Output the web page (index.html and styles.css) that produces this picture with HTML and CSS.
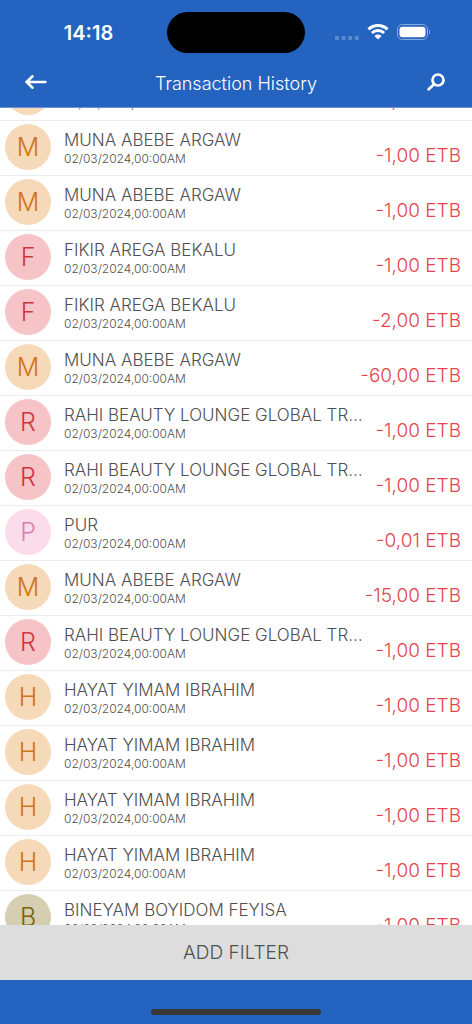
FILE: index.html
```
<!DOCTYPE html>
<html lang="en">
<head>
<meta charset="utf-8">
<meta name="viewport" content="width=device-width, initial-scale=1">
<title>Transaction History</title>
<link rel="stylesheet" href="styles.css">
</head>
<body>
<div class="app">
  <header class="header">
    <div class="status">
      <time class="clock">14:18</time>
      <div class="island"></div>
      <div class="indicators">
        <svg class="signal" viewBox="0 0 24 4" aria-hidden="true"><rect x="0" width="4" height="4" rx="1"/><rect x="6.6" width="4" height="4" rx="1"/><rect x="13.2" width="4" height="4" rx="1"/><rect x="19.8" width="4" height="4" rx="1"/></svg>
        <svg class="wifi" viewBox="0 0 22 16" aria-hidden="true"><path d="M1.5 5.4A13.4 13.4 0 0 1 20.5 5.4M4.9 9A8.6 8.6 0 0 1 17.1 9"/><path class="wifi-dot" d="M7.4 11.9Q11 9 14.6 11.9L11 15.6Z"/></svg>
        <svg class="battery" viewBox="0 0 34 16" aria-hidden="true"><rect class="shell" x=".5" y=".5" width="30" height="15" rx="5"/><rect class="charge" x="2.5" y="2.7" width="26" height="10.6" rx="3.2"/><path class="cap" d="M32 5.5Q34 8 32 10.5Z"/></svg>
      </div>
    </div>
    <nav class="bar">
      <button class="icon-button" type="button" aria-label="Back"><svg class="back" viewBox="0 0 22 14" aria-hidden="true"><path d="M20.3 7H2M7.4 1.4L1.6 7L7.4 12.6"/></svg></button>
      <h1 class="title">Transaction History</h1>
      <button class="icon-button" type="button" aria-label="Search"><svg class="search" viewBox="0 0 18 18" aria-hidden="true"><circle cx="11" cy="7" r="5.5"/><path d="M7 11.2L1.7 16.2"/></svg></button>
    </nav>
  </header>
  <main class="scroller">
    <ul class="list">
      <li class="row"><span class="avatar orange">M</span><div class="who"><span class="name">MUNA ABEBE ARGAW</span><time class="date">02/03/2024,00:00AM</time></div><span class="amount">-1,00 ETB</span></li>
      <li class="row"><span class="avatar orange">M</span><div class="who"><span class="name">MUNA ABEBE ARGAW</span><time class="date">02/03/2024,00:00AM</time></div><span class="amount">-1,00 ETB</span></li>
      <li class="row"><span class="avatar orange">M</span><div class="who"><span class="name">MUNA ABEBE ARGAW</span><time class="date">02/03/2024,00:00AM</time></div><span class="amount">-1,00 ETB</span></li>
      <li class="row"><span class="avatar red">F</span><div class="who"><span class="name">FIKIR AREGA BEKALU</span><time class="date">02/03/2024,00:00AM</time></div><span class="amount">-1,00 ETB</span></li>
      <li class="row"><span class="avatar red">F</span><div class="who"><span class="name">FIKIR AREGA BEKALU</span><time class="date">02/03/2024,00:00AM</time></div><span class="amount">-2,00 ETB</span></li>
      <li class="row"><span class="avatar orange">M</span><div class="who"><span class="name">MUNA ABEBE ARGAW</span><time class="date">02/03/2024,00:00AM</time></div><span class="amount">-60,00 ETB</span></li>
      <li class="row"><span class="avatar red">R</span><div class="who"><span class="name">RAHI BEAUTY LOUNGE GLOBAL TR…</span><time class="date">02/03/2024,00:00AM</time></div><span class="amount">-1,00 ETB</span></li>
      <li class="row"><span class="avatar red">R</span><div class="who"><span class="name">RAHI BEAUTY LOUNGE GLOBAL TR…</span><time class="date">02/03/2024,00:00AM</time></div><span class="amount">-1,00 ETB</span></li>
      <li class="row"><span class="avatar pink">P</span><div class="who"><span class="name">PUR</span><time class="date">02/03/2024,00:00AM</time></div><span class="amount">-0,01 ETB</span></li>
      <li class="row"><span class="avatar orange">M</span><div class="who"><span class="name">MUNA ABEBE ARGAW</span><time class="date">02/03/2024,00:00AM</time></div><span class="amount">-15,00 ETB</span></li>
      <li class="row"><span class="avatar red">R</span><div class="who"><span class="name">RAHI BEAUTY LOUNGE GLOBAL TR…</span><time class="date">02/03/2024,00:00AM</time></div><span class="amount">-1,00 ETB</span></li>
      <li class="row"><span class="avatar orange">H</span><div class="who"><span class="name">HAYAT YIMAM IBRAHIM</span><time class="date">02/03/2024,00:00AM</time></div><span class="amount">-1,00 ETB</span></li>
      <li class="row"><span class="avatar orange">H</span><div class="who"><span class="name">HAYAT YIMAM IBRAHIM</span><time class="date">02/03/2024,00:00AM</time></div><span class="amount">-1,00 ETB</span></li>
      <li class="row"><span class="avatar orange">H</span><div class="who"><span class="name">HAYAT YIMAM IBRAHIM</span><time class="date">02/03/2024,00:00AM</time></div><span class="amount">-1,00 ETB</span></li>
      <li class="row"><span class="avatar orange">H</span><div class="who"><span class="name">HAYAT YIMAM IBRAHIM</span><time class="date">02/03/2024,00:00AM</time></div><span class="amount">-1,00 ETB</span></li>
      <li class="row"><span class="avatar olive">B</span><div class="who"><span class="name">BINEYAM BOYIDOM FEYISA</span><time class="date">02/03/2024,00:00AM</time></div><span class="amount">-1,00 ETB</span></li>
    </ul>
  </main>
  <button class="filter" type="button">ADD FILTER</button>
  <footer class="footer"><div class="home"></div></footer>
</div>
</body>
</html>
```

FILE: styles.css
```
* { box-sizing: border-box; }
body {
  margin: 0;
  font-family: Inter, "Liberation Sans", sans-serif;
  font-weight: 300;
  color: #505050;
  background: #fff;
}
button {
  border: 0;
  padding: 0;
  background: none;
  font: inherit;
  color: inherit;
}
.app { display: flex; flex-direction: column; height: 100vh; }

.header { flex: none; background: #2563c0; color: #fff; border-bottom: 1px solid #6b93d2; }
.status {
  display: grid;
  grid-template-columns: 1fr 138px 1fr;
  align-items: center;
  padding-top: 12px;
}
.clock { justify-self: center; padding-left: 10px; font-size: 20px; font-weight: 600; line-height: 24px; }
.island { height: 41px; border-radius: 21px; background: #000; }
.indicators { display: flex; align-items: center; gap: 8px; padding-left: 30px; }
.signal { width: 24px; height: 4px; margin-top: 10px; fill: #fff; opacity: .25; }
.wifi { width: 22px; height: 16px; margin-top: -2px; fill: none; stroke: #fff; stroke-width: 3; }
.wifi-dot { fill: #fff; stroke: none; }
.battery { width: 34px; height: 16px; margin-top: -2px; }
.shell { fill: none; stroke: #fff; opacity: .45; }
.charge { fill: #fff; }
.cap { fill: #fff; opacity: .5; }

.bar { display: flex; align-items: center; justify-content: space-between; height: 54px; padding: 4px 16px 0; }
.icon-button { display: grid; place-items: center; width: 40px; height: 40px; }
.icon-button svg { fill: none; stroke: #fff; stroke-width: 2.7; stroke-linecap: round; }
.back { width: 22px; height: 14px; }
.search { width: 18px; height: 18px; }
.title { margin: 0; padding-top: 4px; font-size: 18px; line-height: 24px; font-weight: 300; }

.scroller { flex: 1; min-height: 0; overflow: hidden; }
.list { margin: -42px 0 0; padding: 0; list-style: none; }
.row {
  display: flex;
  align-items: flex-start;
  height: 55px;
  padding: 0 11px 0 5px;
  border-bottom: 1px solid #ececee;
}
.avatar {
  flex: none;
  width: 46px;
  height: 46px;
  margin: 3px 13px 0 0;
  border-radius: 50%;
  font-size: 25px;
  line-height: 47px;
  text-align: center;
}
.orange { background: #f6d9b9; color: #cf7417; }
.red { background: #f6c3c7; color: #cf3540; }
.pink { background: #fbdcea; color: #d97fae; }
.olive { background: #d5ceb1; color: #77620f; }
.who { flex: 1; min-width: 0; display: flex; flex-direction: column; padding-top: 8px; white-space: nowrap; }
.name { font-size: 17px; line-height: 22px; }
.date { font-size: 12px; line-height: 15px; }
.amount { flex: none; padding-top: 22px; font-size: 19px; line-height: 26px; color: #e5444e; }

.filter { flex: none; height: 55px; background: #ddd; font-size: 19px; line-height: 24px; }
.footer { flex: none; display: flex; justify-content: center; align-items: flex-end; height: 44px; padding-bottom: 9px; background: #2563c0; }
.home { width: 36%; height: 6px; border-radius: 3px; background: #373737; }
```
